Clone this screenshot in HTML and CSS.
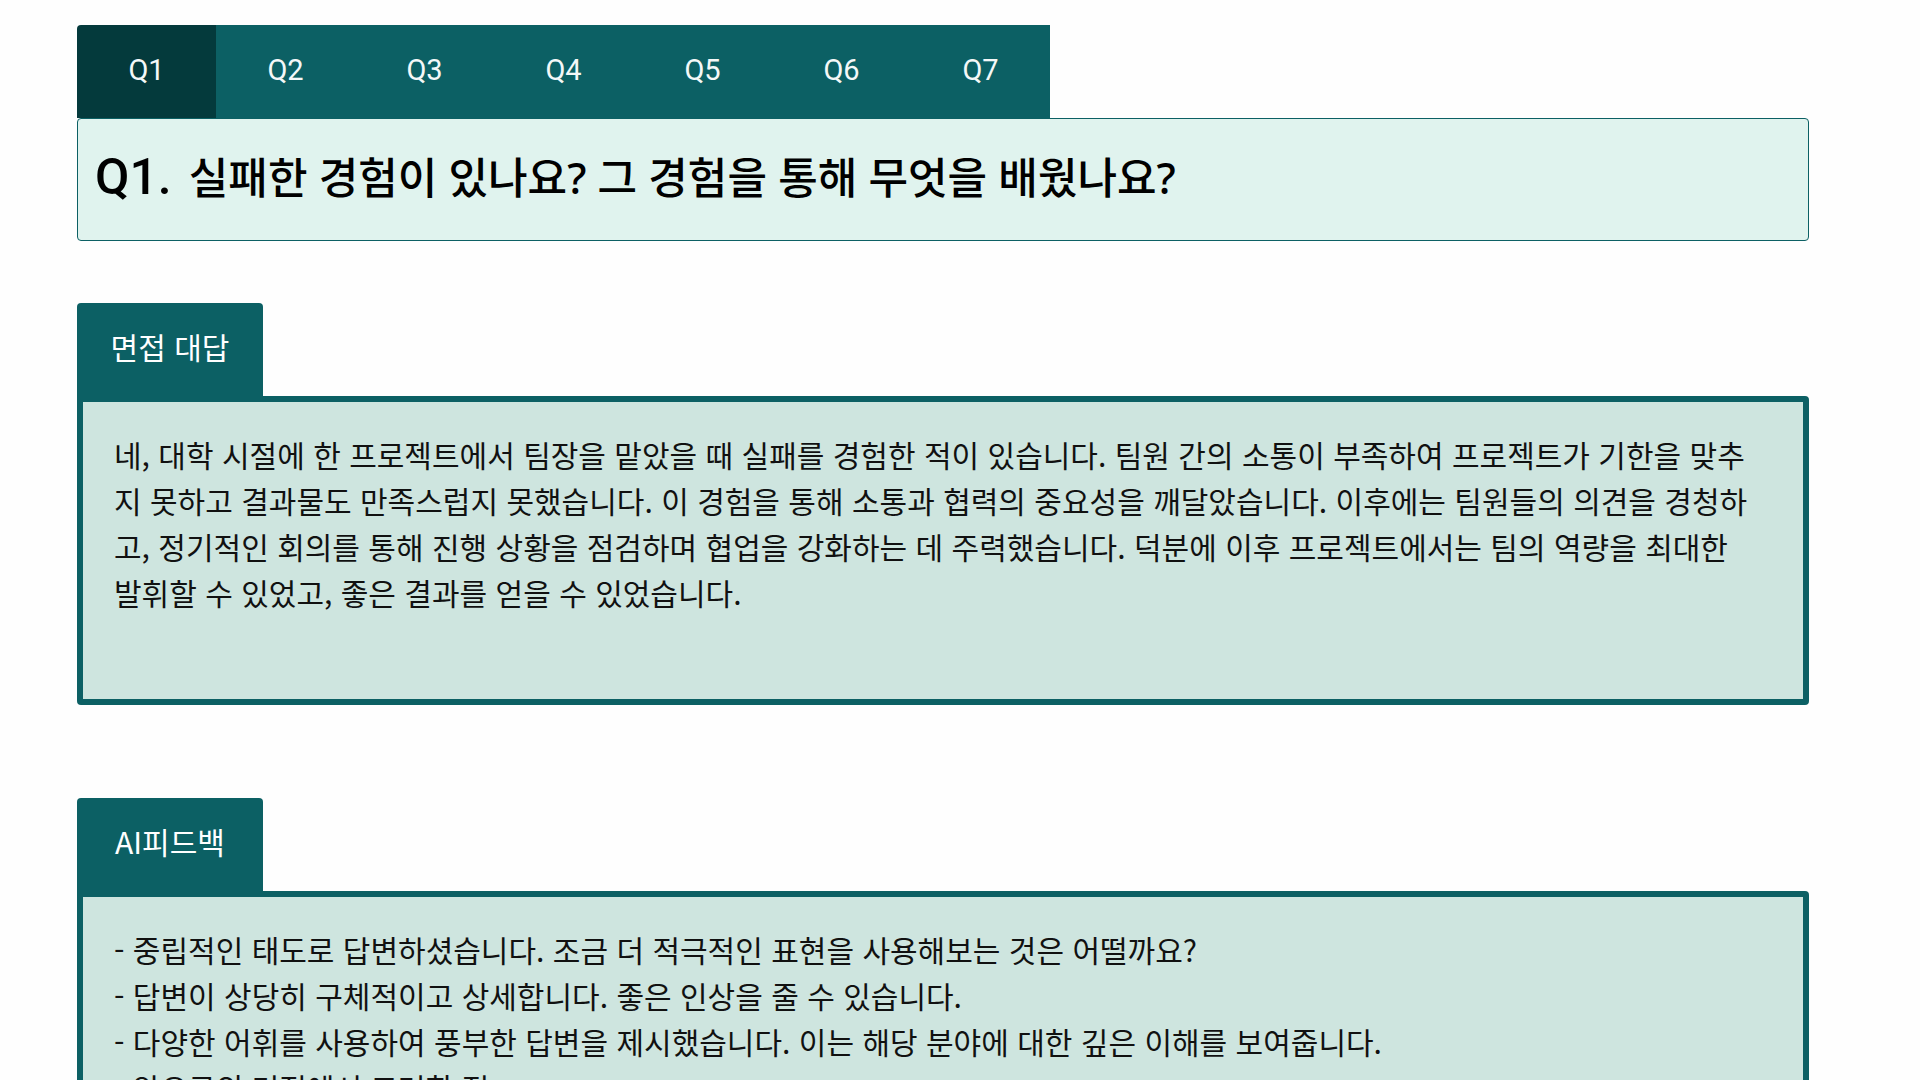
FILE: index.html
```html
<!DOCTYPE html>
<html lang="ko">
<head>
<meta charset="utf-8">
<meta name="viewport" content="width=device-width, initial-scale=1">
<title>면접 피드백</title>
<link rel="stylesheet" href="styles.css">
</head>
<body>
<main class="page">
  <nav class="tabs" aria-label="질문 목록">
    <button type="button" class="tab tab-active" aria-current="true">Q1</button>
    <button type="button" class="tab">Q2</button>
    <button type="button" class="tab">Q3</button>
    <button type="button" class="tab">Q4</button>
    <button type="button" class="tab">Q5</button>
    <button type="button" class="tab">Q6</button>
    <button type="button" class="tab">Q7</button>
  </nav>
  <h1 class="question"><span class="question-number">Q1.</span><span>실패한 경험이 있나요? 그 경험을 통해 무엇을 배웠나요?</span></h1>

  <section class="block">
    <h2 class="label">면접 대답</h2>
    <div class="panel">
      <p class="text">네, 대학 시절에 한 프로젝트에서 팀장을 맡았을 때 실패를 경험한 적이 있습니다. 팀원 간의 소통이 부족하여 프로젝트가 기한을 맞추지 못하고 결과물도 만족스럽지 못했습니다. 이 경험을 통해 소통과 협력의 중요성을 깨달았습니다. 이후에는 팀원들의 의견을 경청하고, 정기적인 회의를 통해 진행 상황을 점검하며 협업을 강화하는 데 주력했습니다. 덕분에 이후 프로젝트에서는 팀의 역량을 최대한 발휘할 수 있었고, 좋은 결과를 얻을 수 있었습니다.</p>
    </div>
  </section>

  <section class="block">
    <h2 class="label">AI피드백</h2>
    <div class="panel">
      <p class="text">- 중립적인 태도로 답변하셨습니다. 조금 더 적극적인 표현을 사용해보는 것은 어떨까요?</p>
      <p class="text">- 답변이 상당히 구체적이고 상세합니다. 좋은 인상을 줄 수 있습니다.</p>
      <p class="text">- 다양한 어휘를 사용하여 풍부한 답변을 제시했습니다. 이는 해당 분야에 대한 깊은 이해를 보여줍니다.</p>
      <p class="text">- 앞으로의 면접에서 고려할 점</p>
    </div>
  </section>
</main>
</body>
</html>
```
FILE: styles.css
```css
:root {
  --teal: #0c6064;
  --teal-dark: #043a3c;
}

* {
  box-sizing: border-box;
}

body {
  margin: 0;
  background: #fefefe;
  color: #111;
  font-family: "Noto Sans CJK KR", sans-serif;
}

.page {
  height: 100vh;
  padding: 25px 111px 0 77px;
  overflow-y: auto;
  scrollbar-width: none;
}

.tabs {
  display: flex;
}

.tab {
  width: 139px;
  height: 93px;
  padding: 0 0 4px;
  border: 0;
  background: var(--teal);
  color: #f4f8f8;
  font: 400 29px/40px Roboto, "Noto Sans CJK KR", sans-serif;
  cursor: pointer;
}

.tab-active {
  border-top-left-radius: 4px;
  background: var(--teal-dark);
}

.question {
  display: flex;
  align-items: baseline;
  gap: 17px;
  min-height: 123px;
  margin: 0 0 62px;
  padding: 22px 17px 16px;
  border: 1px solid var(--teal);
  border-radius: 4px;
  background: #e0f3ee;
  color: #000;
  font-family: "Noto Sans", "Noto Sans CJK KR", sans-serif;
  font-size: 43px;
  font-weight: 500;
  line-height: 72px;
}

.question-number {
  font-family: Roboto, "Noto Sans CJK KR", sans-serif;
  font-size: 50px;
}

.block {
  margin-bottom: 93px;
}

.label {
  display: flex;
  align-items: center;
  justify-content: center;
  width: 186px;
  height: 93px;
  margin: 0;
  padding-bottom: 8px;
  border-radius: 4px 4px 0 0;
  background: var(--teal);
  color: #fff;
  font-size: 30px;
  font-weight: 400;
  line-height: 46px;
}

.panel {
  min-height: 309px;
  padding: 29px 48px 29px 31px;
  border: 6px solid var(--teal);
  border-radius: 0 4px 4px 4px;
  background: #cee5df;
}

.text {
  margin: 0;
  font-size: 30px;
  font-weight: 400;
  line-height: 46px;
}
```
